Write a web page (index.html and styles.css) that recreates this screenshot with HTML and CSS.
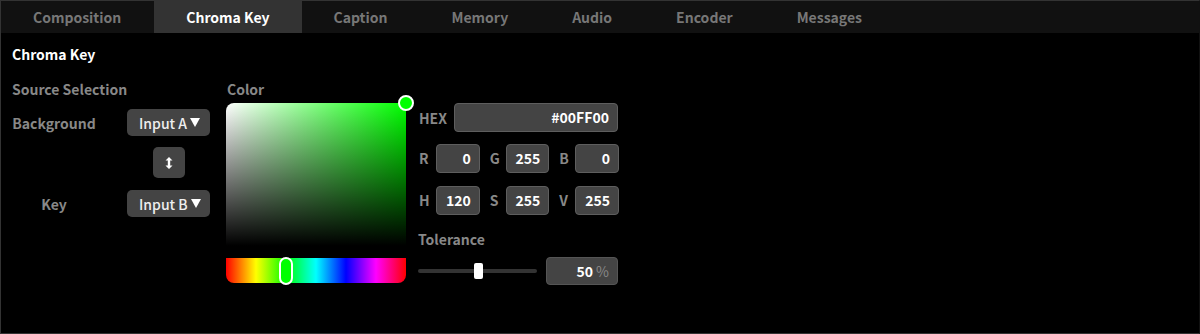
FILE: index.html
```html
<!DOCTYPE html>
<html>
<head>
<meta charset="utf-8">
<link rel="stylesheet" href="styles.css">
</head>
<body>
<div class="frame">
  <nav class="tabs">
    <div class="tab">Composition</div>
    <div class="tab active">Chroma Key</div>
    <div class="tab">Caption</div>
    <div class="tab">Memory</div>
    <div class="tab">Audio</div>
    <div class="tab">Encoder</div>
    <div class="tab">Messages</div>
  </nav>
  <main class="content">
    <h1 class="title">Chroma Key</h1>
    <div class="panels">
      <section class="source">
        <div class="label head">Source Selection</div>
        <div class="src-row first">
          <span class="label src-label">Background</span>
          <button class="dropdown">Input A <span class="tri"></span></button>
        </div>
        <div class="swap-row">
          <button class="swap">
            <svg width="10" height="14" viewBox="0 0 10 14"><path d="M5 1 L8.5 4.5 H6.2 V9.5 H8.5 L5 13 L1.5 9.5 H3.8 V4.5 H1.5 Z" fill="#fff"/></svg>
          </button>
        </div>
        <div class="src-row">
          <span class="label src-label">Key</span>
          <button class="dropdown">Input B <span class="tri"></span></button>
        </div>
      </section>
      <section class="color">
        <div class="label head color-label">Color</div>
        <div class="picker">
          <div class="sv"></div>
          <div class="hue"></div>
          <div class="sv-handle"></div>
          <div class="hue-handle"></div>
        </div>
      </section>
      <section class="values">
        <div class="row hex-row">
          <span class="label hex-label">HEX</span>
          <div class="field hex">#00FF00</div>
        </div>
        <div class="row">
          <span class="label ch">R</span><div class="field num">0</div>
          <span class="label ch sp">G</span><div class="field num">255</div>
          <span class="label ch sp">B</span><div class="field num">0</div>
        </div>
        <div class="row hsv-row">
          <span class="label ch">H</span><div class="field num">120</div>
          <span class="label ch sp">S</span><div class="field num">255</div>
          <span class="label ch sp">V</span><div class="field num">255</div>
        </div>
        <div class="label tol-label">Tolerance</div>
        <div class="row tol-row">
          <div class="slider"><div class="track"></div><div class="thumb"></div></div>
          <div class="field tol">50 <span class="pct">%</span></div>
        </div>
      </section>
    </div>
  </main>
</div>
</body>
</html>
```
FILE: styles.css
```css
* { box-sizing: border-box; }
html, body { margin: 0; padding: 0; background: #000; }
body {
  font-family: "Noto Sans CJK JP", "Noto Sans", sans-serif;
  font-size: 14px;
  color: #fff;
}
.frame {
  width: 1200px;
  height: 334px;
  border: 1px solid #333;
  border-right-color: #111;
  background: #000;
  overflow: hidden;
}
.tabs {
  display: flex;
  height: 32px;
  background: #111;
}
.tab {
  padding: 0 32px;
  line-height: 32px;
  font-weight: 700;
  color: #777;
  white-space: nowrap;
}
.tab:first-child { padding-left: 32px; padding-right: 33px; }
.tab.active { background: #333; color: #fff; }
.content { padding: 11px 0 0 11px; }
.title {
  margin: 0;
  font-size: 14px;
  line-height: 20px;
  font-weight: 700;
  color: #fff;
}
.panels {
  display: flex;
  margin-top: 15px;
}
.label {
  font-weight: 700;
  color: #888;
  line-height: 20px;
}
.source { width: 214px; }
.src-row {
  display: flex;
  align-items: center;
  margin-top: 12px;
}
.src-row.first { margin-top: 10px; }
.src-label {
  width: 84px;
  text-align: center;
  margin-right: 31px;
}
.dropdown {
  width: 83px;
  height: 27px;
  border: none;
  border-radius: 5px;
  background: #444;
  color: #eee;
  font-family: inherit;
  font-size: 14px;
  font-weight: 500;
  padding: 0 0 0 12px;
  display: flex;
  align-items: center;
  gap: 3px;
}
.tri {
  width: 0; height: 0;
  border-left: 5px solid transparent;
  border-right: 5px solid transparent;
  border-top: 9px solid #fff;
}
.swap-row {
  display: flex;
  margin-top: 11px;
  padding-left: 141px;
}
.swap {
  width: 32px;
  height: 31px;
  border: none;
  border-radius: 5px;
  background: #444;
  display: flex;
  align-items: center;
  justify-content: center;
  padding: 0;
}
.color { width: 192px; }
.color-label { padding-left: 1px; }
.picker {
  position: relative;
  margin-top: 4px;
  width: 180px;
  height: 180px;
  border-radius: 8px;
}
.sv {
  height: 155px;
  border-radius: 8px 8px 0 0;
  background:
    linear-gradient(to bottom, rgba(0,0,0,0) 0%, #000 92%),
    linear-gradient(to right, #fff, #00ff00);
}
.hue {
  height: 25px;
  border-radius: 0 0 8px 8px;
  background: linear-gradient(to right, #f00 0%, #ff0 16.67%, #0f0 33.33%, #0ff 50%, #00f 66.67%, #f0f 83.33%, #f00 100%);
}
.sv-handle {
  position: absolute;
  left: 172px;
  top: -8px;
  width: 16px;
  height: 16px;
  border-radius: 50%;
  border: 2px solid #fff;
  background: #00ff00;
}
.hue-handle {
  position: absolute;
  left: 53px;
  top: 154px;
  width: 14px;
  height: 28px;
  border-radius: 7px;
  border: 2px solid #fff;
  background: #00ff00;
}
.values { width: 201px; padding-top: 24px; }
.row { display: flex; align-items: center; }
.row + .row { margin-top: 12px; }
.row.hsv-row { margin-top: 13px; }
.hex-label { width: 36px; padding-left: 1px; }
.field {
  height: 29px;
  background: #444;
  border: 1px solid #5e5e5e;
  border-radius: 4px;
  color: #fff;
  font-weight: 700;
  text-align: right;
  line-height: 27px;
  padding-right: 8px;
}
.hex { width: 164px; }
.ch { width: 18px; padding-left: 1px; position: relative; top: -1px; }
.ch.sp { margin-left: 9px; width: 17px; }
.num { width: 44px; }
.tol-label { margin-top: 14px; }
.row.tol-row { margin-top: 8px; }
.slider {
  position: relative;
  width: 119px;
  height: 28px;
  margin-right: 9px;
}
.track {
  position: absolute;
  left: 0; right: 0;
  top: 12px;
  height: 4px;
  border-radius: 2px;
  background: #333;
}
.thumb {
  position: absolute;
  left: 56px;
  top: 6px;
  width: 9px;
  height: 16px;
  border-radius: 2px;
  background: #fff;
}
.tol { width: 72px; height: 28px; border-color: #555; }
.pct { color: #888; font-weight: 400; }
```
